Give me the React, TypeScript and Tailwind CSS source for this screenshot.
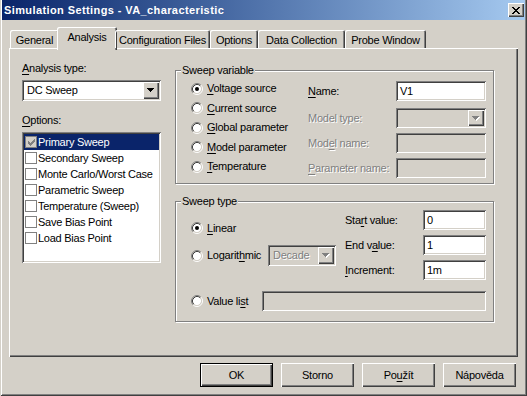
import React from "react";

const sunken =
  "shadow-[inset_1px_1px_0_#808080,inset_-1px_-1px_0_#ffffff,inset_2px_2px_0_#404040,inset_-2px_-2px_0_#d4d0c8]";
const raised =
  "shadow-[inset_1px_1px_0_#ffffff,inset_-1px_-1px_0_#404040,inset_-2px_-2px_0_#808080]";
const grayText = "text-[#808080] [text-shadow:1px_1px_0_#ffffff]";
const etched =
  "m-0 border border-[#808080] p-0 shadow-[inset_1px_1px_0_#ffffff,1px_1px_0_#ffffff]";

const tabs = [
  { label: "General", w: "w-[49px]" },
  { label: "Analysis", w: "w-[60px]", active: true },
  { label: "Configuration Files", w: "w-[95px]" },
  { label: "Options", w: "w-[48px]" },
  { label: "Data Collection", w: "w-[87px]" },
  { label: "Probe Window", w: "w-[81px]" },
];

const options = [
  "Primary Sweep",
  "Secondary Sweep",
  "Monte Carlo/Worst Case",
  "Parametric Sweep",
  "Temperature (Sweep)",
  "Save Bias Point",
  "Load Bias Point",
];

function Acc({ children }: { children: React.ReactNode }) {
  return <span className="underline underline-offset-[2px]">{children}</span>;
}

function Arrow({ disabled }: { disabled?: boolean }) {
  return (
    <svg width="8" height="5" viewBox="0 0 8 5" shapeRendering="crispEdges">
      {disabled && (
        <path d="M1 1h7v1H1z M2 2h5v1H2z M3 3h3v1H3z M4 4h1v1H4z" fill="#ffffff" />
      )}
      <path
        d="M0 0h7v1H0z M1 1h5v1H1z M2 2h3v1H2z M3 3h1v1H3z"
        fill={disabled ? "#808080" : "#000000"}
      />
    </svg>
  );
}

function Combo({
  w,
  h,
  text,
  disabled,
}: {
  w: string;
  h: string;
  text?: string;
  disabled?: boolean;
}) {
  return (
    <div className={`flex ${w} ${h} p-[2px] ${sunken}`}>
      <div
        className={`flex flex-1 items-center pl-[3px] ${
          disabled ? `bg-[#d4d0c8] ${grayText}` : "bg-white"
        }`}
      >
        {text}
      </div>
      <div className={`flex w-[16px] items-center justify-center bg-[#d4d0c8] ${raised}`}>
        <Arrow disabled={disabled} />
      </div>
    </div>
  );
}

function Field({
  w,
  text,
  disabled,
}: {
  w: string;
  text?: string;
  disabled?: boolean;
}) {
  return (
    <div
      className={`flex h-[20px] ${w} items-center px-[4px] ${sunken} ${
        disabled ? "bg-[#d4d0c8]" : "bg-white"
      }`}
    >
      {text}
    </div>
  );
}

function Radio({ checked }: { checked?: boolean }) {
  return (
    <svg width="12" height="12" viewBox="0 0 12 12" className="shrink-0">
      <circle cx="6" cy="6" r="4.2" fill="#ffffff" />
      <path d="M2.11 9.89 A5.5 5.5 0 0 1 9.89 2.11" stroke="#808080" fill="none" />
      <path d="M9.89 2.11 A5.5 5.5 0 0 1 2.11 9.89" stroke="#ffffff" fill="none" />
      <path d="M2.82 9.18 A4.5 4.5 0 0 1 9.18 2.82" stroke="#404040" fill="none" />
      <path d="M9.18 2.82 A4.5 4.5 0 0 1 2.82 9.18" stroke="#d4d0c8" fill="none" />
      {checked && <circle cx="6" cy="6" r="2" fill="#000000" />}
    </svg>
  );
}

function RadioRow({
  checked,
  children,
  className = "",
}: {
  checked?: boolean;
  children: React.ReactNode;
  className?: string;
}) {
  return (
    <div className={`flex items-center gap-[4px] ${className}`}>
      <Radio checked={checked} />
      <span>{children}</span>
    </div>
  );
}

function Check({ selected }: { selected?: boolean }) {
  return (
    <div
      className={`flex h-[12px] w-[12px] items-center justify-center border border-[#808080] ${
        selected ? "bg-[#d4d0c8]" : "bg-white"
      }`}
    >
      {selected && (
        <svg width="7" height="7" viewBox="0 0 7 7" shapeRendering="crispEdges">
          <path
            d="M6 0h1v1H6z M5 1h2v1H5z M0 2h1v1H0z M4 2h3v1H4z M0 3h2v1H0z M3 3h3v1H3z M0 4h5v1H0z M1 5h3v1H1z M2 6h1v1H2z"
            fill="#808080"
          />
        </svg>
      )}
    </div>
  );
}

function Button({ children, def }: { children: React.ReactNode; def?: boolean }) {
  return (
    <div
      className={`flex h-[24px] w-[73px] items-center justify-center bg-[#d4d0c8] ${raised} ${
        def ? "border border-black" : ""
      }`}
    >
      {children}
    </div>
  );
}

export default function App() {
  return (
    <div className="h-[396px] w-[527px] overflow-hidden bg-[#d4d0c8] px-[2px] pb-[2px] font-['Liberation_Sans',Arial,sans-serif] text-[11px] leading-[13px] tracking-[-0.25px] text-black shadow-[inset_1px_0_0_#d4d0c8,inset_-1px_-1px_0_#404040,inset_2px_0_0_#ffffff,inset_-2px_-2px_0_#808080]">
      {/* title bar */}
      <div className="flex h-[20px] items-center justify-between bg-linear-to-r from-[#0a246a] to-[#a6caf0] pl-[2px] pr-[1px]">
        <span className="text-[11px] font-bold tracking-[0.4px] text-white">
          Simulation Settings - VA_characteristic
        </span>
        <div className={`flex h-[14px] w-[16px] items-center justify-center bg-[#d4d0c8] ${raised}`}>
          <svg width="8" height="7" viewBox="0 0 8 7" shapeRendering="crispEdges">
            <path
              d="M0 0h2v1H0z M6 0h2v1H6z M1 1h2v1H1z M5 1h2v1H5z M2 2h4v1H2z M3 3h2v1H3z M2 4h4v1H2z M1 5h2v1H1z M5 5h2v1H5z M0 6h2v1H0z M6 6h2v1H6z"
              fill="#000000"
            />
          </svg>
        </div>
      </div>

      <div className="mx-[7px] mt-[7px]">
        {/* tabs */}
        <div className="relative z-10 flex h-[21px] items-end pl-[1px]">
          {tabs.map((t) =>
            t.active ? (
              <div
                key={t.label}
                className={`-mx-[2px] -mb-[2px] flex h-[23px] ${t.w} items-start justify-center rounded-t-[2px] bg-[#d4d0c8] pt-[4px] shadow-[inset_1px_1px_0_#ffffff,inset_-1px_0_0_#404040,inset_-2px_0_0_#808080]`}
              >
                {t.label}
              </div>
            ) : (
              <div
                key={t.label}
                className={`flex h-[18px] ${t.w} items-start justify-center rounded-t-[2px] pt-[4px] shadow-[inset_1px_1px_0_#ffffff,inset_-1px_0_0_#404040,inset_-2px_0_0_#808080]`}
              >
                {t.label}
              </div>
            ),
          )}
        </div>

        {/* panel */}
        <div className="flex h-[309px] gap-[14px] pl-[13px] pt-[14px] shadow-[inset_1px_1px_0_#ffffff,inset_-1px_-1px_0_#404040,inset_-2px_-2px_0_#808080]">
          <div className="flex w-[139px] flex-col">
            <div className="h-[13px]">
              <Acc>A</Acc>nalysis type:
            </div>
            <div className="mt-[5px]">
              <Combo w="w-[139px]" h="h-[21px]" text="DC Sweep" />
            </div>
            <div className="mt-[13px] h-[13px]">
              <Acc>O</Acc>ptions:
            </div>
            <div className={`mt-[5px] h-[131px] bg-white p-[2px] ${sunken}`}>
              {options.map((o, i) => (
                <div
                  key={o}
                  className={`flex h-[16px] items-center gap-[1px] pl-[1px] ${
                    i === 0 ? "bg-[#0a246a] text-white" : ""
                  }`}
                >
                  <Check selected={i === 0} />
                  <span>{o}</span>
                </div>
              ))}
            </div>
          </div>

          <div className="mt-[2px] flex flex-col">
            <fieldset className={`h-[120px] w-[319px] ${etched}`}>
              <legend className="ml-[5px] bg-[#d4d0c8] px-[1px]">Sweep variable</legend>
              <div className="flex pl-[15px]">
                <div className="mt-[2px] flex w-[117px] flex-col">
                  <RadioRow checked className="h-[19.5px]">
                    <Acc>V</Acc>oltage source
                  </RadioRow>
                  <RadioRow className="h-[19.5px]">
                    <Acc>C</Acc>urrent source
                  </RadioRow>
                  <RadioRow className="h-[19.5px]">
                    <Acc>G</Acc>lobal parameter
                  </RadioRow>
                  <RadioRow className="h-[19.5px]">
                    <Acc>M</Acc>odel parameter
                  </RadioRow>
                  <RadioRow className="h-[19.5px]">
                    <Acc>T</Acc>emperature
                  </RadioRow>
                </div>
                <div className="mt-[4px] flex flex-col">
                  <div className="flex h-[20px] items-center">
                    <span className="w-[88px]">
                      <Acc>N</Acc>ame:
                    </span>
                    <Field w="w-[90px]" text="V1" />
                  </div>
                  <div className="mt-[7px] flex h-[20px] items-center">
                    <span className={`w-[88px] ${grayText}`}>Model type:</span>
                    <Combo w="w-[90px]" h="h-[20px]" disabled />
                  </div>
                  <div className="mt-[5px] flex h-[20px] items-center">
                    <span className={`w-[88px] ${grayText}`}>
                      Mod<Acc>e</Acc>l name:
                    </span>
                    <Field w="w-[90px]" disabled />
                  </div>
                  <div className="mt-[5px] flex h-[20px] items-center">
                    <span className={`w-[88px] ${grayText}`}>
                      <Acc>P</Acc>arameter name:
                    </span>
                    <Field w="w-[90px]" disabled />
                  </div>
                </div>
              </div>
            </fieldset>

            <fieldset className={`mt-[11px] h-[127px] w-[319px] ${etched}`}>
              <legend className="ml-[5px] bg-[#d4d0c8] px-[1px]">Sweep type</legend>
              <div className="flex flex-col pl-[15px]">
                <div className="flex">
                  <div className="flex w-[154px] flex-col pt-[10px]">
                    <RadioRow checked className="h-[20px]">
                      <Acc>L</Acc>inear
                    </RadioRow>
                    <div className="mt-[7px] flex h-[21px] items-center gap-[4px]">
                      <Radio />
                      <span className="w-[57px]">
                        Logarit<Acc>h</Acc>mic
                      </span>
                      <Combo w="w-[68px]" h="h-[21px]" text="Decade" disabled />
                    </div>
                  </div>
                  <div className="mt-[2px] flex flex-col gap-[5px]">
                    <div className="flex h-[20px] items-center">
                      <span className="w-[78px]">
                        Sta<Acc>r</Acc>t value:
                      </span>
                      <Field w="w-[63px]" text="0" />
                    </div>
                    <div className="flex h-[20px] items-center">
                      <span className="w-[78px]">
                        End v<Acc>a</Acc>lue:
                      </span>
                      <Field w="w-[63px]" text="1" />
                    </div>
                    <div className="flex h-[20px] items-center">
                      <span className="w-[78px]">
                        <Acc>I</Acc>ncrement:
                      </span>
                      <Field w="w-[63px]" text="1m" />
                    </div>
                  </div>
                </div>
                <div className="mt-[11px] flex h-[20px] items-center gap-[4px]">
                  <Radio />
                  <span className="w-[51px]">
                    Value li<Acc>s</Acc>t
                  </span>
                  <Field w="w-[224px]" disabled />
                </div>
              </div>
            </fieldset>
          </div>
        </div>
      </div>

      {/* buttons */}
      <div className="mt-[6px] flex justify-end gap-[8px] pr-[9px]">
        <Button def>OK</Button>
        <Button>Storno</Button>
        <Button>
          Po<Acc>u</Acc>žít
        </Button>
        <Button>Nápověda</Button>
      </div>
    </div>
  );
}
